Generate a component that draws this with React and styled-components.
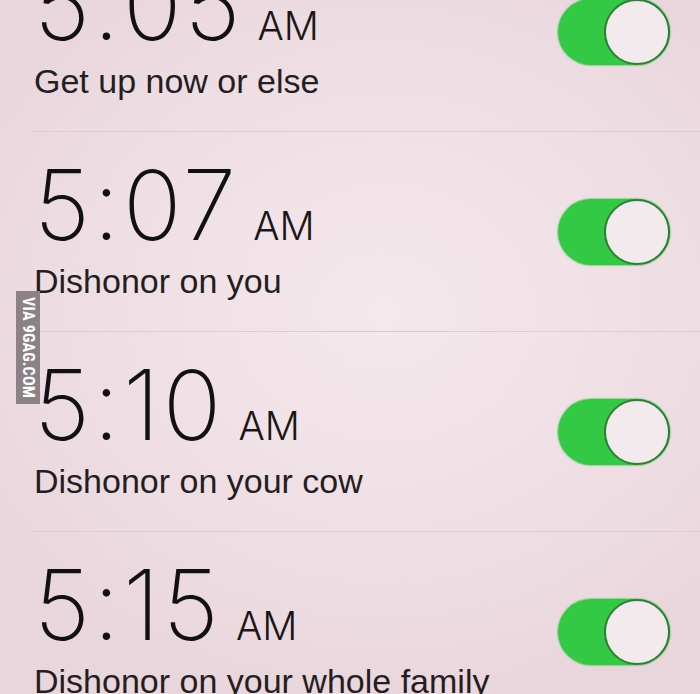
import React from 'react';
import styled, { createGlobalStyle } from 'styled-components';

const GlobalStyle = createGlobalStyle`
  html, body {
    margin: 0;
    padding: 0;
  }
  body {
    width: 700px;
    height: 694px;
    overflow: hidden;
    font-family: "Liberation Sans", Arial, sans-serif;
  }
`;

const Screen = styled.div`
  position: relative;
  width: 700px;
  height: 694px;
  overflow: hidden;
  background: radial-gradient(ellipse 70% 60% at 55% 45%, #f4e8ec 0%, #efdfe5 55%, #e9d5dc 100%);
`;

const List = styled.div`
  margin-top: -69px;
  padding-left: 33px;
`;

const Row = styled.div`
  display: flex;
  align-items: center;
  justify-content: space-between;
  height: 200px;
  box-sizing: border-box;
  border-top: 1px solid #dccbd0;
  padding-right: 30px;
`;

const TextBlock = styled.div`
  align-self: flex-start;
  display: flex;
  flex-direction: column;
  padding-left: 1px;
  padding-top: 24px;
`;

const TimeLine = styled.div`
  display: flex;
  align-items: baseline;
  gap: 14px;
  height: 97px;
`;

const Time = styled.span`
  font-family: Inter, "Liberation Sans", sans-serif;
  font-weight: 200;
  font-size: 97px;
  line-height: 97px;
  letter-spacing: 3px;
  color: #111;
`;

const Meridiem = styled.span`
  font-family: Inter, "Liberation Sans", sans-serif;
  font-weight: 300;
  font-size: 39px;
  color: #1a1717;
`;

const Label = styled.div`
  font-size: 34px;
  line-height: 57px;
  color: #231f20;
  white-space: nowrap;
`;

const Toggle = styled.div`
  position: relative;
  width: 112px;
  height: 66px;
  border-radius: 33px;
  background: #33c944;
  box-shadow: 0 0 1px 1px rgba(60, 200, 70, 0.5);
`;

const Knob = styled.div`
  position: absolute;
  right: 0;
  top: 0;
  width: 62px;
  height: 62px;
  border-radius: 50%;
  border: 2px solid #2d7f36;
  background: #f3eaed;
`;

const Badge = styled.div`
  position: absolute;
  left: 16px;
  top: 291px;
  width: 24px;
  height: 113px;
  background: #8c8286;
  color: #fff;
  display: flex;
  align-items: center;
  justify-content: center;
  writing-mode: vertical-rl;
  font-family: "Liberation Sans Narrow", "Roboto Condensed", Roboto, sans-serif;
  font-weight: 700;
  font-size: 16px;
  letter-spacing: 0.2px;
`;

const alarms = [
  { time: '5:05', label: 'Get up now or else' },
  { time: '5:07', label: 'Dishonor on you' },
  { time: '5:10', label: 'Dishonor on your cow' },
  { time: '5:15', label: 'Dishonor on your whole family' },
];

export default function App() {
  return (
    <Screen>
      <GlobalStyle />
      <List>
        {alarms.map((a) => (
          <Row key={a.time}>
            <TextBlock>
              <TimeLine>
                <Time>{a.time}</Time>
                <Meridiem>AM</Meridiem>
              </TimeLine>
              <Label>{a.label}</Label>
            </TextBlock>
            <Toggle>
              <Knob />
            </Toggle>
          </Row>
        ))}
      </List>
      <Badge>VIA 9GAG.COM</Badge>
    </Screen>
  );
}
